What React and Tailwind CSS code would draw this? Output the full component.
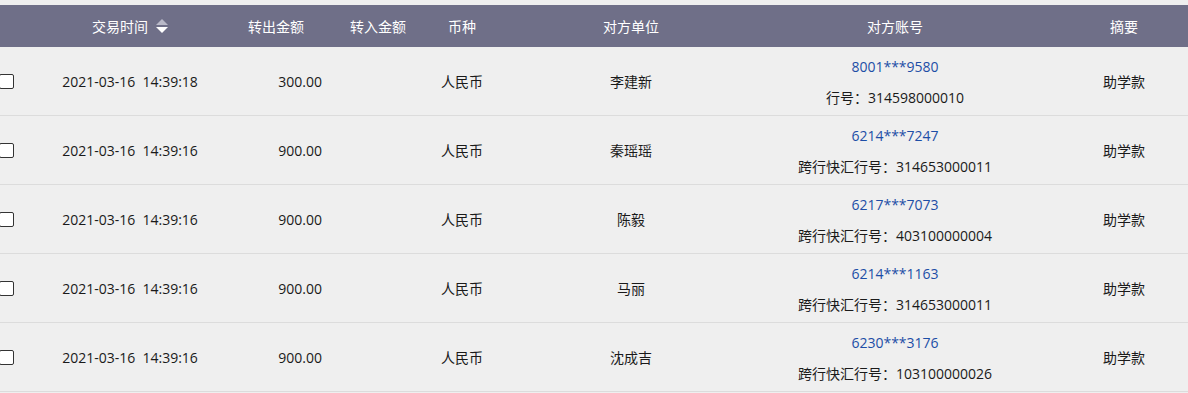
import React from 'react';

const rows = [
  { time: '2021-03-16  14:39:18', out: '300.00', unit: '李建新', account: '8001***9580', bank: '行号：314598000010' },
  { time: '2021-03-16  14:39:16', out: '900.00', unit: '秦瑶瑶', account: '6214***7247', bank: '跨行快汇行号：314653000011' },
  { time: '2021-03-16  14:39:16', out: '900.00', unit: '陈毅', account: '6217***7073', bank: '跨行快汇行号：403100000004' },
  { time: '2021-03-16  14:39:16', out: '900.00', unit: '马丽', account: '6214***1163', bank: '跨行快汇行号：314653000011' },
  { time: '2021-03-16  14:39:16', out: '900.00', unit: '沈成吉', account: '6230***3176', bank: '跨行快汇行号：103100000026' },
];

const cols = 'grid grid-cols-[40px_180px_112px_92px_76px_262px_266px_1fr]';

function SortIcon() {
  return (
    <svg className="ml-[8px] w-[12px] h-[14px]" viewBox="0 0 12 14">
      <path d="M6 0 L12 6 L0 6 Z" fill="#b9b9c8" />
      <path d="M0 8 L12 8 L6 14 Z" fill="#ffffff" />
    </svg>
  );
}

export default function App() {
  return (
    <div className="w-[1188px] h-[393px] bg-[#efefef] pt-[5px] overflow-hidden text-[14px] text-[#1a1a1a]" style={{ fontFamily: '"Open Sans", "Noto Sans CJK SC", sans-serif' }}>
      <div className={`${cols} h-[42px] bg-[#6f6f88] text-white items-center text-center`}>
        <div></div>
        <div className="flex items-center justify-center">交易时间<SortIcon /></div>
        <div>转出金额</div>
        <div>转入金额</div>
        <div>币种</div>
        <div>对方单位</div>
        <div>对方账号</div>
        <div className="pl-[32px]">摘要</div>
      </div>
      {rows.map((r, i) => (
        <div key={i} className={`${cols} h-[69px] border-b border-[#dcdcdc] items-center text-center`}>
          <div className="flex">
            <div className="-ml-[1px] w-[15px] h-[15px] bg-white border border-[#333] rounded-[2px]"></div>
          </div>
          <div className="whitespace-pre">{r.time}</div>
          <div className="text-right pr-[10px]">{r.out}</div>
          <div></div>
          <div>人民币</div>
          <div>{r.unit}</div>
          <div className="flex flex-col items-center pt-[2px]">
            <div className="leading-[32px] text-[#1d4ea6]">{r.account}</div>
            <div className="leading-[30px]">{r.bank}</div>
          </div>
          <div className="pl-[32px]">助学款</div>
        </div>
      ))}
    </div>
  );
}
